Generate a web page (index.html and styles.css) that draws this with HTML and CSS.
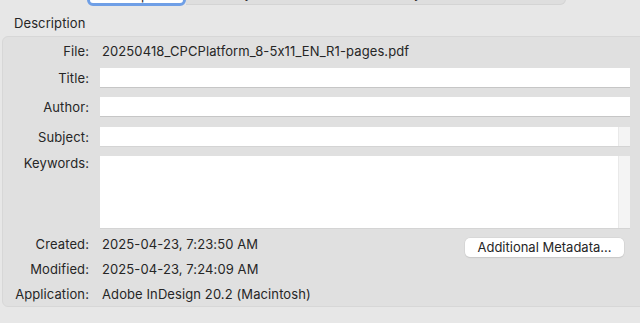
FILE: index.html
```html
<!DOCTYPE html>
<html lang="en">
<head>
    <meta charset="UTF-8">
    <title>Document Info</title>
    <link rel="stylesheet" href="styles.css">
</head>
<body>
    <div class="tabs">
        <span class="tab tab-on">Description</span>
        <span class="tab tab-rest">Security&nbsp;&nbsp;&nbsp;&nbsp;Fonts&nbsp;&nbsp;&nbsp;&nbsp;Initial View&nbsp;&nbsp;&nbsp;&nbsp;Keywords</span>
    </div>
    <div class="heading">Description</div>
    <div class="box">
        <div class="row row-file">
            <span class="label">File:</span>
            <span class="value">20250418_CPCPlatform_8-5x11_EN_R1-pages.pdf</span>
        </div>
        <div class="row row-title">
            <span class="label">Title:</span>
            <div class="field"></div>
        </div>
        <div class="row row-author">
            <span class="label">Author:</span>
            <div class="field"></div>
        </div>
        <div class="row row-subject">
            <span class="label">Subject:</span>
            <div class="field field-scroll"><div class="area"></div><div class="strip"></div></div>
        </div>
        <div class="row row-keywords">
            <span class="label">Keywords:</span>
            <div class="field field-scroll field-tall"><div class="area"></div><div class="strip"></div></div>
        </div>
        <div class="row row-created">
            <span class="label">Created:</span>
            <div class="value-line">
                <span class="value">2025-04-23, 7:23:50 AM</span>
                <span class="btn">Additional Metadata...</span>
            </div>
        </div>
        <div class="row row-modified">
            <span class="label">Modified:</span>
            <span class="value">2025-04-23, 7:24:09 AM</span>
        </div>
        <div class="row row-app">
            <span class="label">Application:</span>
            <span class="value">Adobe InDesign 20.2 (Macintosh)</span>
        </div>
    </div>
</body>
</html>
```

FILE: styles.css
```css
* {
    margin: 0;
    padding: 0;
    box-sizing: border-box;
}
html, body {
    overflow: hidden;
}
body {
    width: 640px;
    height: 323px;
    background-color: #e7e7e7;
    color: #262626;
    font-family: "Inter", "Liberation Sans", sans-serif;
    font-size: 13px;
    font-feature-settings: "calt" 0;
    letter-spacing: 0.1px;
    line-height: 20px;
}
.tabs {
    display: flex;
    margin: -16px 0 0 87px;
    height: 22px;
}
.tab {
    height: 22px;
    line-height: 16px;
    text-align: center;
    white-space: nowrap;
    overflow: hidden;
}
.tab-on {
    width: 99px;
    background-color: #fff;
    border: 3px solid #6f9fe6;
    border-radius: 6px;
}
.tab-rest {
    width: 380px;
    height: 21px;
    padding-left: 14px;
    text-align: left;
    background-color: #dedede;
    border: 1px solid #d4d4d4;
    border-left: none;
    border-radius: 0 6px 6px 0;
}
.heading {
    padding-left: 14px;
    margin-top: 7px;
    height: 20px;
}
.box {
    margin: 3px -10px 0 2px;
    padding: 4px 19px 0 0;
    height: 271px;
    background-color: #e0e0e0;
    border: 1px solid #d7d7d7;
    border-radius: 6px;
}
.row {
    display: grid;
    grid-template-columns: 86px 1fr;
    column-gap: 11px;
    align-items: start;
}
.label {
    text-align: right;
}
.value {
    padding-left: 2px;
}
.row-title {
    margin-top: 7px;
}
.row-author {
    margin-top: 9px;
}
.row-subject {
    margin-top: 10px;
}
.row-keywords {
    margin-top: 9px;
}
.row-keywords .label {
    margin-top: -3px;
}
.row-created {
    margin-top: 6px;
}
.row-modified {
    margin-top: 2px;
}
.row-app {
    margin-top: 5px;
}
.field {
    height: 19px;
    background-color: #fff;
    box-shadow: 0 1px 0 #c6c6c6;
}
.field-scroll {
    display: flex;
    box-shadow: 0 1px 0 #d4d4d4;
}
.field-tall {
    height: 72px;
}
.field-scroll .area {
    flex: 1;
    background-color: #fff;
}
.field-scroll .strip {
    width: 12px;
    background-color: #f4f4f4;
    border-left: 1px solid #e9e9e9;
}
.value-line {
    display: flex;
    justify-content: space-between;
}
.btn {
    margin: 4px 6px 0 0;
    width: 159px;
    height: 19px;
    line-height: 19px;
    text-align: center;
    letter-spacing: 0;
    background-color: #fff;
    border-radius: 5px;
    box-shadow: 0 0 0 0.5px #cfcfcf, 0 1px 1px #c4c4c4;
}
```
